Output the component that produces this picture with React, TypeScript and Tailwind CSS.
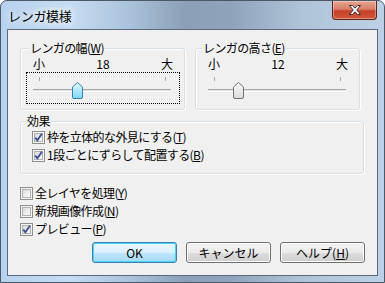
import React from 'react';

const font = { fontFamily: '"Noto Sans CJK JP", "Noto Sans", sans-serif' };

const Check = ({ checked, label }: { checked: boolean; label: React.ReactNode }) => (
  <div className="flex h-[18px] items-center gap-[2px] text-[12px] leading-[18px] text-black">
    <div className="relative h-[13px] w-[13px] border border-[#8e8f8f] bg-[#f4f4f4] p-[1px]">
      <div className="h-full w-full border border-[#aeb0b3] bg-gradient-to-br from-[#dcdcdc] to-[#fbfbfb]" />
      {checked && (
        <svg className="absolute left-0 top-0" width="11" height="11" viewBox="0 0 11 11">
          <path d="M2.2 5.6 L4.4 8.2 L8.9 1.8" fill="none" stroke="#3c4f94" strokeWidth="1.9" />
        </svg>
      )}
    </div>
    <span className="tracking-[-0.6px]">{label}</span>
  </div>
);

const Slider = ({ value, thumbX, focused, hot }: { value: string; thumbX: number; focused: boolean; hot: boolean }) => (
  <div className="flex flex-col pt-[8px]">
    <div className="ml-[12px] flex w-[140px] justify-between text-[12px] leading-[14px] text-black">
      <span>小</span>
      <span>{value}</span>
      <span>大</span>
    </div>
    <div
      className={`ml-[5px] mt-[1px] h-[32px] w-[154px] border border-dotted ${focused ? 'border-black' : 'border-transparent'}`}
    >
      <svg width="152" height="30" viewBox="0 0 152 30">
        <defs>
          <linearGradient id={`th${value}`} x1="0" y1="0" x2="0" y2="1">
            <stop offset="0" stopColor={hot ? '#e4f8fe' : '#fbfbfb'} />
            <stop offset="1" stopColor={hot ? '#7fd6f3' : '#dadada'} />
          </linearGradient>
        </defs>
        <rect x="12" y="4" width="1" height="4" fill="#a8a8a8" />
        <rect x="138" y="4" width="1" height="4" fill="#a8a8a8" />
        <rect x="6" y="16" width="138" height="1" fill="#a6a6a6" />
        <rect x="6" y="17" width="138" height="1" fill="#e2e3e3" />
        <rect x="6" y="18" width="138" height="1" fill="#ffffff" />
        <path
          d={`M${thumbX + 0.5} 14 L${thumbX + 5.5} 9.5 L${thumbX + 10.5} 14 L${thumbX + 10.5} 24 Q${thumbX + 10.5} 25.5 ${thumbX + 9} 25.5 L${thumbX + 2} 25.5 Q${thumbX + 0.5} 25.5 ${thumbX + 0.5} 24 Z`}
          fill={`url(#th${value})`}
          stroke={hot ? '#3c7fb1' : '#707070'}
        />
      </svg>
    </div>
  </div>
);

const Group = ({ label, className, children, labelLeft }: { label: React.ReactNode; className: string; children: React.ReactNode; labelLeft: string }) => (
  <div className={`relative rounded-[3px] border border-[#d5dfe5] shadow-[inset_1px_1px_0_#fff,1px_1px_0_#fff] ${className}`}>
    <span className={`absolute top-[-8px] ${labelLeft} bg-[#f0f0f0] px-[1px] text-[12px] leading-[14px] tracking-[-0.6px] text-black`}>
      {label}
    </span>
    {children}
  </div>
);

const Btn = ({ children, def }: { children: React.ReactNode; def?: boolean }) => (
  <button
    className={`h-[21px] w-[85px] rounded-[3px] border text-[12px] leading-[17px] text-black ${
      def
        ? 'border-[#3c7fb1] bg-[linear-gradient(#eaf6fd_0%,#d9f0fc_50%,#bee6fd_51%,#a7d9f5_100%)] shadow-[inset_0_0_0_1px_#48d4f7]'
        : 'border-[#707070] bg-[linear-gradient(#f2f2f2_0%,#ebebeb_50%,#dddddd_51%,#cfcfcf_100%)] shadow-[inset_0_0_0_1px_#fcfcfc]'
    }`}
  >
    {children}
  </button>
);

export default function App() {
  return (
    <div
      style={font}
      className="flex h-[283px] w-[385px] flex-col overflow-hidden rounded-t-[7px] border border-[#4b5866] bg-[linear-gradient(90deg,#b7d2ee_0%,#c6dcf2_18%,#a9c1da_34%,#8ba0b6_48%,#8fa4ba_60%,#aec3d8_78%,#bdd1e6_100%)]"
    >
      {/* title bar */}
      <div className="flex h-[28px] shrink-0 items-start justify-between pl-[7px] pr-[7px]">
        <span className="mt-[6px] text-[13px] leading-[18px] tracking-[-0.3px] text-black [text-shadow:0_0_6px_#fff,0_0_10px_#fff]">
          レンガ模様
        </span>
        <div className="flex h-[19px] w-[45px] items-center justify-center rounded-b-[4px] border border-t-0 border-[#5e2418] bg-[linear-gradient(#e8a592_0%,#d88068_45%,#c5412a_55%,#d0573a_100%)] shadow-[inset_0_0_0_1px_rgba(255,255,255,0.35)]">
          <svg width="14" height="12" viewBox="0 0 14 12">
            <path
              d="M1.5 1.5 L4.5 1.5 L7 4.2 L9.5 1.5 L12.5 1.5 L8.8 6 L12.5 10.5 L9.5 10.5 L7 7.8 L4.5 10.5 L1.5 10.5 L5.2 6 Z"
              fill="#fff"
              stroke="#3b2a2a"
              strokeWidth="1"
              strokeLinejoin="round"
            />
          </svg>
        </div>
      </div>

      {/* client */}
      <div className="mx-[6px] flex h-[247px] flex-col border border-[#5b6b7d] bg-[#f0f0f0] px-[12px] pt-[18px]">
        <div className="flex gap-[10px]">
          <Group label={<>レンガの幅(<u>W</u>)</>} labelLeft="left-[8px]" className="h-[62px] w-[165px]">
            <Slider value="18" thumbX={45} focused hot />
          </Group>
          <Group label={<>レンガの高さ(<u>E</u>)</>} labelLeft="left-[6px]" className="h-[62px] w-[165px]">
            <Slider value="12" thumbX={31} focused={false} hot={false} />
          </Group>
        </div>

        <Group label="効果" labelLeft="left-[5px]" className="mt-[11px] h-[53px] w-[344px]">
          <div className="flex flex-col pl-[11px] pt-[6px]">
            <Check checked label={<>枠を立体的な外見にする(<u>T</u>)</>} />
            <Check checked label={<>1段ごとにずらして配置する(<u>B</u>)</>} />
          </div>
        </Group>

        <div className="mt-[10px] flex flex-col">
          <Check checked={false} label={<>全レイヤを処理(<u>Y</u>)</>} />
          <Check checked={false} label={<>新規画像作成(<u>N</u>)</>} />
          <Check checked label={<>プレビュー(<u>P</u>)</>} />
        </div>

        <div className="mt-[4px] flex justify-end gap-[9px]">
          <Btn def>OK</Btn>
          <Btn>キャンセル</Btn>
          <Btn>ヘルプ(<u>H</u>)</Btn>
        </div>
      </div>
    </div>
  );
}
